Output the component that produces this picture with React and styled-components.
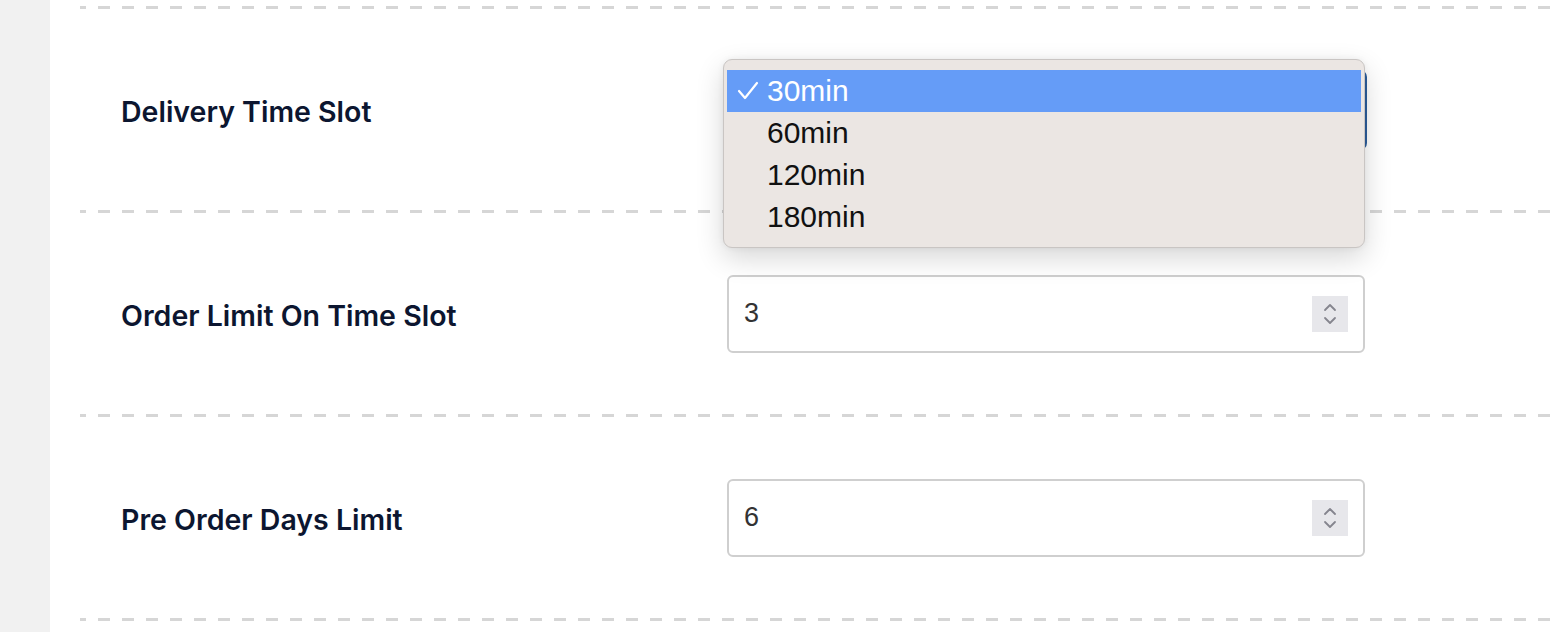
import styled, { createGlobalStyle } from "styled-components";

const GlobalStyle = createGlobalStyle`
    html, body {
        margin: 0;
        padding: 0;
        background: #ffffff;
        overflow: hidden;
    }
    * {
        box-sizing: border-box;
    }
`;

const options = ["30min", "60min", "120min", "180min"];

const fields = [
    { label: "Order Limit On Time Slot", value: "3" },
    { label: "Pre Order Days Limit", value: "6" },
];

function Spinner() {
    return (
        <SpinBox>
            <svg width="16" height="26" viewBox="0 0 16 26" fill="none">
                <polyline points="3,9 8,4 13,9" stroke="#85858e" strokeWidth="1.8" strokeLinecap="round" strokeLinejoin="round" />
                <polyline points="3,17 8,22 13,17" stroke="#85858e" strokeWidth="1.8" strokeLinecap="round" strokeLinejoin="round" />
            </svg>
        </SpinBox>
    );
}

function SelectPopup() {
    return (
        <Popup>
            {options.map((opt, i) => (
                <Option key={opt} $active={i === 0}>
                    <Check>
                        {i === 0 && (
                            <svg width="22" height="20" viewBox="0 0 22 20" fill="none">
                                <polyline points="2,10 8,17 20,2" stroke="#ffffff" strokeWidth="2.2" strokeLinecap="round" strokeLinejoin="round" />
                            </svg>
                        )}
                    </Check>
                    {opt}
                </Option>
            ))}
        </Popup>
    );
}

function App() {
    return (
        <Page>
            <GlobalStyle />
            <Sidebar />
            <Content>
                <Divider />
                <Row>
                    <Label>Delivery Time Slot</Label>
                    <Control>
                        <SelectBox />
                        <SelectPopup />
                    </Control>
                </Row>
                {fields.map((f) => (
                    <div key={f.label}>
                        <Divider />
                        <Row>
                            <Label>{f.label}</Label>
                            <Control>
                                <NumberField>
                                    <Value>{f.value}</Value>
                                    <Spinner />
                                </NumberField>
                            </Control>
                        </Row>
                    </div>
                ))}
                <Divider />
            </Content>
        </Page>
    );
}

export default App;

const Page = styled.div`
    display: flex;
    width: 1550px;
    height: 632px;
    overflow: hidden;
    background: #ffffff;
`;

const Sidebar = styled.div`
    width: 50px;
    flex-shrink: 0;
    background: #f1f1f1;
`;

const Content = styled.div`
    flex: 1;
    padding: 6px 0 0 30px;
`;

const Divider = styled.div`
    height: 3px;
    background-image: repeating-linear-gradient(
        to right,
        #d6d6d6 0,
        #d6d6d6 12px,
        transparent 12px,
        transparent 24px
    );
    background-position: -6px 0;
`;

const Row = styled.div`
    height: 201px;
    display: flex;
    align-items: center;
    padding: 0 0 0 41px;
`;

const Label = styled.div`
    width: 606px;
    flex-shrink: 0;
    padding-top: 3px;
    font-family: "Inter", "Liberation Sans", sans-serif;
    font-weight: 600;
    font-size: 28.5px;
    color: #0c1630;
`;

const Control = styled.div`
    position: relative;
    width: 640px;
`;

const SelectBox = styled.div`
    width: 640px;
    height: 80px;
    border: 3px solid #2d5e9b;
    border-radius: 7px;
    background: #ffffff;
`;

const Popup = styled.div`
    position: absolute;
    left: -4px;
    top: -11px;
    width: 642px;
    height: 189px;
    padding: 10px 3px 0;
    background: #ebe6e3;
    border: 1px solid #c9c5c3;
    border-radius: 9px;
    box-shadow: 0 10px 28px rgba(0, 0, 0, 0.16), 0 0 6px rgba(0, 0, 0, 0.06);
    z-index: 5;
`;

const Option = styled.div`
    display: flex;
    align-items: center;
    height: 42px;
    padding-left: 10px;
    font-family: "Liberation Sans", "Helvetica", sans-serif;
    font-size: 30px;
    color: ${(p) => (p.$active ? "#ffffff" : "#111111")};
    background: ${(p) => (p.$active ? "#659cf7" : "transparent")};
`;

const Check = styled.span`
    display: inline-flex;
    width: 30px;
    align-items: center;
`;

const NumberField = styled.div`
    width: 638px;
    height: 78px;
    border: 2px solid #cfcfcf;
    border-radius: 6px;
    display: flex;
    align-items: center;
    justify-content: space-between;
    padding: 0 15px;
    background: #ffffff;
`;

const Value = styled.span`
    font-family: "Liberation Sans", "Helvetica", sans-serif;
    font-size: 27px;
    color: #333333;
`;

const SpinBox = styled.div`
    width: 36px;
    height: 36px;
    background: #e7e7eb;
    display: flex;
    align-items: center;
    justify-content: center;
`;
